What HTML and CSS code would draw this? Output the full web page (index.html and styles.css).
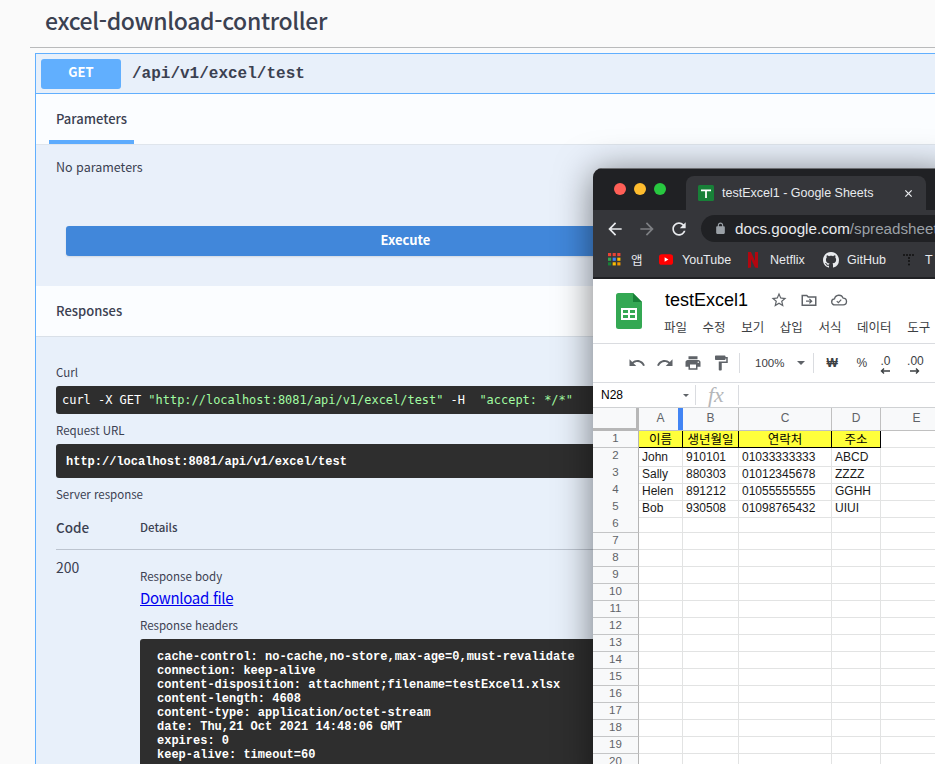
FILE: index.html
```html
<!DOCTYPE html>
<html lang="ko">
<head>
<meta charset="utf-8">
<title>excel-download-controller</title>
<link rel="stylesheet" href="styles.css">
</head>
<body>
<main class="page">
  <h4 class="tag">excel-download-controller</h4>
  <section class="op">
    <div class="summary">
      <span class="method">GET</span>
      <span class="path">/api/v1/excel/test</span>
    </div>
    <div class="tabs"><span class="tab">Parameters</span></div>
    <div class="params">
      <p class="no-params">No parameters</p>
      <button class="execute">Execute</button>
    </div>
    <div class="resp-head">Responses</div>
    <div class="responses">
      <div class="label curl-label">Curl</div>
      <div class="curl">curl -X GET <span class="str">"http://localhost:8081/api/v1/excel/test"</span> -H&nbsp; <span class="str">"accept: */*"</span></div>
      <div class="label url-label">Request URL</div>
      <div class="code-url">http://localhost:8081/api/v1/excel/test</div>
      <div class="label server-label">Server response</div>
      <div class="table-head"><span class="col-code">Code</span><span class="col-details">Details</span></div>
      <div class="table-row">
        <div class="status">200</div>
        <div class="details">
          <div class="label body-label">Response body</div>
          <a class="download" href="#">Download file</a>
          <div class="label headers-label">Response headers</div>
          <pre class="headers">cache-control: no-cache,no-store,max-age=0,must-revalidate
connection: keep-alive
content-disposition: attachment;filename=testExcel1.xlsx
content-length: 4608
content-type: application/octet-stream
date: Thu,21 Oct 2021 14:48:06 GMT
expires: 0
keep-alive: timeout=60</pre>
        </div>
      </div>
    </div>
  </section>
</main>

<div class="window">
  <div class="titlebar">
    <div class="lights"><i class="red"></i><i class="amber"></i><i class="green"></i></div>
    <div class="chrome-tab">
      <svg class="fav" viewBox="0 0 16 16"><rect width="16" height="16" rx="1.5" fill="#188038"/><path d="M3 4.500h10v1.800H8.900V13H7.100V6.300H3z" fill="#fff"/></svg>
      <span class="tab-title">testExcel1 - Google Sheets</span>
      <svg class="tab-x" viewBox="0 0 10 10"><path d="M1.500 1.500l7 7M8.500 1.500l-7 7" stroke="#e8eaed" stroke-width="1.400" fill="none"/></svg>
    </div>
  </div>
  <div class="navbar">
    <svg class="nav" viewBox="0 0 24 24"><path fill="#e8eaed" d="M20 11H7.830l5.590-5.590L12 4l-8 8 8 8 1.410-1.410L7.830 13H20v-2z"/></svg>
    <svg class="nav" viewBox="0 0 24 24"><path fill="#7d7f83" d="M12 4l-1.410 1.410L16.170 11H4v2h12.170l-5.580 5.590L12 20l8-8z"/></svg>
    <svg class="nav" viewBox="0 0 24 24"><path fill="#e8eaed" d="M17.650 6.350C16.200 4.900 14.210 4 12 4c-4.420 0-7.990 3.580-7.990 8s3.570 8 7.990 8c3.730 0 6.840-2.550 7.730-6h-2.080c-.82 2.330-3.040 4-5.650 4-3.310 0-6-2.690-6-6s2.690-6 6-6c1.660 0 3.140.69 4.220 1.780L13 11h7V4l-2.350 2.350z"/></svg>
    <div class="omnibox">
      <svg class="lock" viewBox="0 0 24 24"><path fill="#9aa0a6" d="M18 8h-1V6c0-2.760-2.240-5-5-5S7 3.240 7 6v2H6c-1.100 0-2 .9-2 2v10c0 1.100.9 2 2 2h12c1.100 0 2-.9 2-2V10c0-1.100-.9-2-2-2zM9 6c0-1.660 1.340-3 3-3s3 1.340 3 3v2H9V6z"/></svg>
      <span class="host">docs.google.com</span><span class="rest">/spreadsheet</span>
    </div>
  </div>
  <div class="bookmarks">
    <span class="bm bm-apps">
      <svg class="bm-icon" viewBox="0 0 14 14"><g>
        <rect x="0" y="0" width="3.400" height="3.400" fill="#ea4335"/><rect x="5" y="0" width="3.400" height="3.400" fill="#ea4335"/><rect x="10" y="0" width="3.400" height="3.400" fill="#ea4335"/>
        <rect x="0" y="5" width="3.400" height="3.400" fill="#34a853"/><rect x="5" y="5" width="3.400" height="3.400" fill="#4285f4"/><rect x="10" y="5" width="3.400" height="3.400" fill="#fbbc04"/>
        <rect x="0" y="10" width="3.400" height="3.400" fill="#188038"/><rect x="5" y="10" width="3.400" height="3.400" fill="#fbbc04"/><rect x="10" y="10" width="3.400" height="3.400" fill="#f29900"/></g></svg>
      앱
    </span>
    <span class="bm bm-yt">
      <svg class="yt" viewBox="0 0 16 12"><rect width="16" height="12" rx="3" fill="#f00"/><path d="M6.400 3.400L10.800 6 6.400 8.600z" fill="#fff"/></svg>
      YouTube
    </span>
    <span class="bm bm-nf">
      <svg class="nf" viewBox="0 0 10 16"><path d="M0 0h3l4 9V0h3v16l-3-.5L3 7v8.500L0 16z" fill="#b20710"/></svg>
      Netflix
    </span>
    <span class="bm bm-gh">
      <svg class="gh" viewBox="0 0 16 16"><path fill="#e8eaed" d="M8 0C3.580 0 0 3.580 0 8c0 3.540 2.290 6.530 5.470 7.590.4.07.55-.17.55-.38 0-.19-.01-.82-.01-1.490-2.010.37-2.530-.49-2.690-.94-.09-.23-.48-.94-.82-1.130-.28-.15-.68-.52-.01-.53.63-.01 1.080.58 1.230.82.72 1.210 1.870.87 2.330.66.07-.52.28-.87.51-1.070-1.780-.2-3.640-.89-3.640-3.950 0-.87.31-1.590.82-2.150-.08-.2-.36-1.020.08-2.120 0 0 .67-.21 2.200.82.64-.18 1.320-.27 2-.27.68 0 1.360.09 2 .27 1.530-1.040 2.200-.82 2.200-.82.44 1.100.16 1.920.08 2.120.51.56.82 1.270.82 2.150 0 3.070-1.870 3.750-3.650 3.950.29.25.54.73.54 1.480 0 1.070-.01 1.930-.01 2.200 0 .21.15.46.55.38A8.013 8.013 0 0016 8c0-4.420-3.580-8-8-8z"/></svg>
      GitHub
    </span>
    <span class="bm bm-t">
      <svg class="tt" viewBox="0 0 12 12"><g fill="#111"><circle cx="1" cy="1" r="1"/><circle cx="4" cy="1" r="1"/><circle cx="7" cy="1" r="1"/><circle cx="10" cy="1" r="1"/><circle cx="6" cy="4" r="1"/><circle cx="6" cy="7" r="1"/><circle cx="6" cy="10.500" r="1"/></g></svg>
      T
    </span>
  </div>
  <div class="edge"></div>
  <div class="doc-head">
    <svg class="sheets-logo" viewBox="0 0 26 36"><path d="M2.500 0H17l9 9v24.500a2.500 2.500 0 0 1-2.500 2.500h-21A2.500 2.500 0 0 1 0 33.500v-31A2.500 2.500 0 0 1 2.500 0z" fill="#34a853"/><path d="M17 0l9 9h-9z" fill="#188038"/><path d="M5 15h16v12H5zm2 2v3h5v-3zm7 0v3h5v-3zm-7 5v3h5v-3zm7 0v3h5v-3z" fill="#fff" fill-rule="evenodd"/></svg>
    <div class="doc-info">
      <div class="doc-title-row">
        <span class="doc-title">testExcel1</span>
        <svg class="doc-ico" viewBox="0 0 24 24"><path fill="#5f6368" d="M22 9.240l-7.190-.62L12 2 9.190 8.630 2 9.240l5.460 4.730L5.820 21 12 17.270 18.180 21l-1.630-7.030L22 9.240zM12 15.400l-3.760 2.270 1-4.280-3.320-2.880 4.380-.38L12 6.100l1.710 4.040 4.380.38-3.320 2.880 1 4.280L12 15.400z"/></svg>
        <svg class="doc-ico" viewBox="0 0 24 24"><path fill="none" stroke="#5f6368" stroke-width="2" d="M3 6h6l2 2h10v11H3z"/><path fill="none" stroke="#5f6368" stroke-width="1.800" d="M8 13.500h7M12.500 10.500l3 3-3 3"/></svg>
        <svg class="doc-ico" viewBox="0 0 24 24"><path fill="none" stroke="#5f6368" stroke-width="1.800" d="M6.500 18.500a4 4 0 0 1-.5-8A6 6 0 0 1 17.500 9.500a4.500 4.500 0 0 1 0 9z"/><path fill="none" stroke="#5f6368" stroke-width="1.600" d="M9 13.500l2.200 2 3.800-4"/></svg>
      </div>
      <div class="menu"><span>파일</span><span>수정</span><span>보기</span><span>삽입</span><span>서식</span><span>데이터</span><span>도구</span></div>
    </div>
  </div>
  <div class="sheet-tools">
    <svg class="tool" viewBox="0 0 24 24"><path fill="#5f6368" d="M12.500 8c-2.650 0-5.050.99-6.900 2.600L2 7v9h9l-3.620-3.620c1.390-1.160 3.160-1.880 5.120-1.880 3.540 0 6.550 2.310 7.600 5.500l2.370-.78C21.080 11.030 17.150 8 12.500 8z"/></svg>
    <svg class="tool" viewBox="0 0 24 24"><path fill="#5f6368" d="M18.400 10.600C16.550 8.990 14.150 8 11.500 8c-4.650 0-8.580 3.030-9.960 7.220L3.900 16c1.050-3.190 4.050-5.500 7.600-5.500 1.950 0 3.730.72 5.120 1.880L13 16h9V7l-3.600 3.600z"/></svg>
    <svg class="tool" viewBox="0 0 24 24"><path fill="#5f6368" d="M19 8H5c-1.660 0-3 1.340-3 3v6h4v4h12v-4h4v-6c0-1.660-1.340-3-3-3zm-3 11H8v-5h8v5zm3-7c-.55 0-1-.45-1-1s.45-1 1-1 1 .45 1 1-.45 1-1 1zm-1-9H6v4h12V3z"/></svg>
    <svg class="tool" viewBox="0 0 24 24"><path fill="#5f6368" d="M18 4V3c0-.55-.45-1-1-1H5c-.55 0-1 .45-1 1v4c0 .55.45 1 1 1h12c.55 0 1-.45 1-1V6h1v4H9v11c0 .55.45 1 1 1h2c.55 0 1-.45 1-1v-9h8V4h-3z"/></svg>
    <i class="sep sep-a"></i>
    <span class="zoom-val">100%</span>
    <i class="caret"></i>
    <i class="sep sep-b"></i>
    <span class="won">₩</span>
    <span class="pct">%</span>
    <span class="dec dec-less">.0<svg class="dec-arrow" viewBox="0 0 10 6"><path d="M10 3H2M4 .6L1.500 3 4 5.400" stroke="#3c4043" stroke-width="1.400" fill="none"/></svg></span>
    <span class="dec dec-more">.00<svg class="dec-arrow" viewBox="0 0 10 6"><path d="M0 3h8M6 .6L8.500 3 6 5.400" stroke="#3c4043" stroke-width="1.400" fill="none"/></svg></span>
  </div>
  <div class="formula">
    <span class="cell-ref">N28</span>
    <i class="caret small"></i>
    <i class="fsep"></i>
    <span class="fx">fx</span>
    <i class="fsep"></i>
  </div>
  <div class="grid">
    <div class="row head-row"><div class="corner"></div><div class="ch cha">A</div><div class="ch">B</div><div class="ch">C</div><div class="ch">D</div><div class="ch">E</div></div>
    <div class="row"><div class="rh">1</div><div class="c y">이름</div><div class="c y">생년월일</div><div class="c y">연락처</div><div class="c y">주소</div><div class="c"></div></div>
    <div class="row"><div class="rh">2</div><div class="c">John</div><div class="c">910101</div><div class="c">01033333333</div><div class="c">ABCD</div><div class="c"></div></div>
    <div class="row"><div class="rh">3</div><div class="c">Sally</div><div class="c">880303</div><div class="c">01012345678</div><div class="c">ZZZZ</div><div class="c"></div></div>
    <div class="row"><div class="rh">4</div><div class="c">Helen</div><div class="c">891212</div><div class="c">01055555555</div><div class="c">GGHH</div><div class="c"></div></div>
    <div class="row"><div class="rh">5</div><div class="c">Bob</div><div class="c">930508</div><div class="c">01098765432</div><div class="c">UIUI</div><div class="c"></div></div>
    <div class="row"><div class="rh">6</div><div class="c"></div><div class="c"></div><div class="c"></div><div class="c"></div><div class="c"></div></div>
    <div class="row"><div class="rh">7</div><div class="c"></div><div class="c"></div><div class="c"></div><div class="c"></div><div class="c"></div></div>
    <div class="row"><div class="rh">8</div><div class="c"></div><div class="c"></div><div class="c"></div><div class="c"></div><div class="c"></div></div>
    <div class="row"><div class="rh">9</div><div class="c"></div><div class="c"></div><div class="c"></div><div class="c"></div><div class="c"></div></div>
    <div class="row"><div class="rh">10</div><div class="c"></div><div class="c"></div><div class="c"></div><div class="c"></div><div class="c"></div></div>
    <div class="row"><div class="rh">11</div><div class="c"></div><div class="c"></div><div class="c"></div><div class="c"></div><div class="c"></div></div>
    <div class="row"><div class="rh">12</div><div class="c"></div><div class="c"></div><div class="c"></div><div class="c"></div><div class="c"></div></div>
    <div class="row"><div class="rh">13</div><div class="c"></div><div class="c"></div><div class="c"></div><div class="c"></div><div class="c"></div></div>
    <div class="row"><div class="rh">14</div><div class="c"></div><div class="c"></div><div class="c"></div><div class="c"></div><div class="c"></div></div>
    <div class="row"><div class="rh">15</div><div class="c"></div><div class="c"></div><div class="c"></div><div class="c"></div><div class="c"></div></div>
    <div class="row"><div class="rh">16</div><div class="c"></div><div class="c"></div><div class="c"></div><div class="c"></div><div class="c"></div></div>
    <div class="row"><div class="rh">17</div><div class="c"></div><div class="c"></div><div class="c"></div><div class="c"></div><div class="c"></div></div>
    <div class="row"><div class="rh">18</div><div class="c"></div><div class="c"></div><div class="c"></div><div class="c"></div><div class="c"></div></div>
    <div class="row"><div class="rh">19</div><div class="c"></div><div class="c"></div><div class="c"></div><div class="c"></div><div class="c"></div></div>
    <div class="row"><div class="rh">20</div><div class="c"></div><div class="c"></div><div class="c"></div><div class="c"></div><div class="c"></div></div>
  </div>
</div>
</body>
</html>
```

FILE: styles.css
```css
* { box-sizing: border-box; }
html, body { margin: 0; height: 764px; overflow: hidden; background: #fafafa; }
body { position: relative; font-family: "Noto Sans CJK KR", "Noto Sans", sans-serif; color: #3b4151; }

.page { width: 935px; height: 764px; overflow: hidden; padding-left: 30px; }
.tag { margin: 0; height: 48px; padding: 3px 0 0 15px; font-size: 23px; letter-spacing: -.34px; line-height: 34px; font-weight: 500; color: #3b4151; border-bottom: 1px solid #b9babb; }

.op { margin: 5px 0 0 5px; border: 1px solid #61affe; border-width: 1px 0 0 1.500px; background: #e8f0fa; }
.summary { height: 40px; padding: 5px 0 0 5px; display: flex; border-bottom: 1px solid #61affe; }
.method { width: 80px; height: 30px; background: #61affe; border-radius: 3px; color: #fff; font-size: 13px; line-height: 26px; font-weight: 700; text-align: center; }
.path { margin-left: 11px; font: 700 16px/30px "Liberation Mono", monospace; color: #3b4151; }

.tabs { height: 51px; background: #fbfdff; padding-left: 13px; border-bottom: 1px solid #dfe5ec; }
.tab { display: block; width: 85px; height: 50px; padding: 0 0 0 7px; border-bottom: 4px solid #5dabfd; font-size: 13px; line-height: 50px; font-weight: 500; }

.params { height: 141px; padding: 12px 0 0 20px; background: #e9f0fa; }
.no-params { margin: 0; font-size: 12.500px; line-height: 20px; }
.execute { display: block; width: 679px; height: 30px; margin: 49px 0 0 10px; padding: 0 0 3px; border: 0; border-radius: 3px; background: #4187da; color: #fff; font: 700 13px/26px "Noto Sans CJK KR", sans-serif; box-shadow: 0 1px 2px rgba(0,0,0,.1); }

.resp-head { height: 51px; padding-left: 20px; background: #fbfdff; border-bottom: 1px solid #d9e0e8; font-size: 13px; line-height: 50px; font-weight: 500; }

.responses { height: 500px; padding: 25px 0 0 20px; background: #e8f0fa; }
.label { font-size: 11.500px; line-height: 20px; }
.curl { height: 28px; padding-left: 6px; margin-top: 4px; background: #2e2e2e; border-radius: 3px 0 0 3px; font: 400 11.960px/28px "DejaVu Sans Mono", monospace; color: #fff; white-space: pre; }
.str { color: #a2fca2; }
.url-label { margin-top: 6px; }
.code-url { height: 34px; padding-left: 10px; margin-top: 4px; background: #2e2e2e; border-radius: 3px 0 0 3px; font: 700 12px/36px "Liberation Mono", monospace; color: #fff; }
.server-label { margin-top: 6px; }

.table-head { display: flex; height: 40px; margin-top: 6px; padding-top: 3px; border-bottom: 1px solid #bcc4cf; align-items: flex-start; }
.col-code { width: 84px; font-size: 13.500px; line-height: 28px; font-weight: 500; }
.col-details { font-size: 11.500px; line-height: 28px; font-weight: 500; }

.table-row { display: flex; padding-top: 6px; }
.status { width: 84px; font-size: 14px; line-height: 22px; }
.details { flex: 1; padding-top: 10px; }
.download { display: block; margin-top: 1px; font-size: 15px; letter-spacing: -.3px; line-height: 22px; color: #0000ee; text-decoration: underline; }
.headers-label { margin-top: 6px; }
.headers { margin: 4px 0 0; padding: 11px 0 0 17px; height: 200px; background: #2e2e2e; border-radius: 3px 0 0 0; font: 700 12px/14px "Liberation Mono", monospace; color: #fff; }

.window { position: absolute; left: 593px; top: 168px; width: 360px; height: 620px; background: #fff; border-radius: 9px 9px 0 0; overflow: hidden; box-shadow: 0 4px 36px rgba(0,0,0,.5); }
.titlebar { height: 42px; background: #202124; display: flex; padding-top: 8px; box-shadow: inset 0 1px 0 #6c6d70; }
.lights { display: flex; gap: 8px; width: 93px; padding: 7px 0 0 21px; }
.lights i { width: 12px; height: 12px; border-radius: 50%; }
.red { background: #ff5f57; }
.amber { background: #febc2e; }
.green { background: #28c840; }
.chrome-tab { width: 240px; height: 34px; background: #35363a; border-radius: 8px 8px 0 0; display: flex; align-items: center; padding-left: 12px; color: #e8eaed; font: 400 12.500px/16px "Liberation Sans", sans-serif; }
.fav { width: 16px; height: 16px; margin-right: 8px; flex: none; }
.tab-title { width: 174px; white-space: nowrap; }
.tab-x { width: 9px; height: 9px; margin-left: 8px; }

.navbar { height: 34px; background: #35363a; display: flex; align-items: center; padding: 3px 0 0 12px; gap: 12px; }
.nav { width: 20px; height: 20px; flex: none; }
.omnibox { margin-left: 0; width: 270px; flex: none; height: 27px; border-radius: 14px 0 0 14px; background: #202124; display: flex; align-items: center; padding-left: 13px; font: 400 15.200px/18px "Liberation Sans", sans-serif; white-space: nowrap; }
.lock { width: 13px; height: 13px; margin-right: 8px; flex: none; }
.host { color: #e8eaed; }
.rest { color: #9aa0a6; }

.bookmarks { height: 33px; background: #35363a; display: flex; align-items: center; padding: 0 0 2px 15px; color: #e8eaed; font: 400 12.500px/16px "Liberation Sans", "Noto Sans CJK KR", sans-serif; white-space: nowrap; }
.bm { display: flex; align-items: center; flex: none; }
.bm-icon { width: 13px; height: 13px; margin-right: 10px; }
.bm-apps { width: 51px; font-family: "Noto Sans CJK KR", sans-serif; }
.yt { width: 14px; height: 11px; margin-right: 9px; }
.bm-yt { width: 89px; }
.nf { width: 10px; height: 16px; margin-right: 12px; }
.bm-nf { width: 75px; }
.gh { width: 16px; height: 16px; margin-right: 8px; }
.bm-gh { width: 80px; }
.tt { width: 12px; height: 12px; margin-right: 10px; }
.edge { height: 2px; background: #202124; }

.doc-head { height: 65px; display: flex; padding: 14px 0 0 23px; border-bottom: 1px solid #dadce0; }
.sheets-logo { width: 26px; height: 36px; flex: none; }
.doc-info { margin-left: 23px; margin-top: -8px; }
.doc-title-row { display: flex; align-items: center; height: 30px; }
.doc-title { width: 105px; font: 400 18px/24px "Liberation Sans", sans-serif; color: #000; }
.doc-ico { width: 18px; height: 18px; margin-right: 12px; }
.menu { display: flex; gap: 15.600px; margin-top: 2px; font-size: 12.500px; line-height: 20px; color: #3c4043; margin-left: -1px; white-space: nowrap; }

.sheet-tools { height: 39px; display: flex; align-items: center; padding-left: 35px; border-bottom: 1px solid #dadce0; }
.tool { width: 18px; height: 18px; margin-right: 10px; flex: none; }
.sep { width: 1px; height: 20px; background: #dadce0; flex: none; }
.sep-a { margin: 0 15px 0 -1px; }
.sep-b { margin: 0 12px 0 8px; }
.zoom-val { font: 400 11.500px/16px "Liberation Sans", sans-serif; color: #3c4043; }
.caret { width: 0; height: 0; border: 4px solid transparent; border-top-color: #5f6368; border-bottom: 0; margin-left: 13px; flex: none; }
.caret.small { border-width: 3px; border-bottom: 0; margin-left: 3px; }
.won { font: 700 12px/16px "Liberation Sans", sans-serif; color: #3c4043; width: 30px; flex: none; }
.pct { font: 400 12px/16px "Liberation Sans", sans-serif; color: #3c4043; width: 14px; flex: none; }
.dec { display: flex; flex-direction: column; align-items: center; width: 30px; padding-top: 2px; flex: none; font: 400 12px/13px "Liberation Sans", sans-serif; color: #3c4043; }
.dec-arrow { width: 10px; height: 6px; }

.formula { height: 24px; display: flex; align-items: center; padding-left: 8px; }
.cell-ref { width: 79px; flex: none; font: 400 12px/16px "Liberation Sans", sans-serif; color: #000; }
.fsep { width: 1px; height: 20px; background: #dadce0; margin-left: 6px; flex: none; }
.fx { margin-left: 12px; width: 20px; flex: none; font: italic 400 22px/22px "Liberation Serif", serif; color: #b4b6b9; margin-right: 4px; }

.grid { border-top: 1px solid #cfd1d3; }
.row { display: grid; grid-template-columns: 46px 44px 56px 93px 49px 72px; height: 17px; font: 400 12px/16px "Liberation Sans", sans-serif; color: #222; }
.head-row { height: 23px; }
.corner { background: #f8f9fa; border-right: 3px solid #b7b7b7; border-bottom: 3px solid #b7b7b7; }
.ch { background: #f8f9fa; border-right: 1px solid #c0c0c0; border-bottom: 1px solid #c0c0c0; font-size: 12px; line-height: 21px; text-align: center; color: #5f6368; position: relative; }
.cha::after { content: ""; position: absolute; right: -1px; top: 0; bottom: 0; width: 5px; background: #4285f4; }
.rh { background: #f8f9fa; border-right: 1px solid #b5b5b5; border-bottom: 1px solid #c4c5c6; font-size: 11.500px; line-height: 14px; text-align: center; color: #5f6368; }
.c { border-right: 1px solid #e2e3e3; border-bottom: 1px solid #e2e3e3; padding-left: 3px; line-height: 18px; color: #1a1a1a; }
.y { background: #ffff3b; border-right: 1px solid #000; border-bottom: 1px solid #000; padding-left: 0; text-align: center; font-family: "Noto Sans CJK KR", sans-serif; font-size: 12.500px; line-height: 16px; color: #000; }
```
